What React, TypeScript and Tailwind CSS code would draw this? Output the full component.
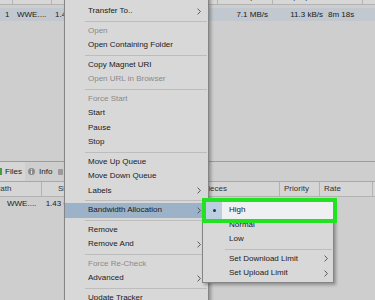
type MenuItem = {
  label?: string;
  disabled?: boolean;
  sub?: boolean;
  sep?: boolean;
  active?: boolean;
};

const MENU: MenuItem[] = [
  { label: "Transfer To..", sub: true },
  { sep: true },
  { label: "Open", disabled: true },
  { label: "Open Containing Folder" },
  { sep: true },
  { label: "Copy Magnet URI" },
  { label: "Open URL in Browser", disabled: true },
  { sep: true },
  { label: "Force Start", disabled: true },
  { label: "Start" },
  { label: "Pause" },
  { label: "Stop" },
  { sep: true },
  { label: "Move Up Queue" },
  { label: "Move Down Queue" },
  { label: "Labels", sub: true },
  { sep: true },
  { label: "Bandwidth Allocation", sub: true, active: true },
  { sep: true },
  { label: "Remove" },
  { label: "Remove And", sub: true },
  { sep: true },
  { label: "Force Re-Check", disabled: true },
  { label: "Advanced", sub: true },
  { sep: true },
  { label: "Update Tracker" },
];

function Chevron() {
  return (
    <svg width="4" height="7" viewBox="0 0 4 7" className="ml-auto shrink-0">
      <path d="M0.6 0.6 L3.4 3.5 L0.6 6.4" fill="none" stroke="#4a4a4a" strokeWidth="0.9" />
    </svg>
  );
}

function InfoIcon() {
  return (
    <svg width="7" height="7" viewBox="0 0 7 7" className="shrink-0">
      <circle cx="3.5" cy="3.5" r="3.5" fill="#8d8d8d" />
      <rect x="3" y="1.2" width="1" height="1" fill="#e6e6e6" />
      <rect x="3" y="2.8" width="1" height="3" fill="#e6e6e6" />
    </svg>
  );
}

export default function App() {
  return (
    <div className="relative h-[300px] w-[375px] overflow-hidden bg-[#cecece] font-['Liberation_Sans',Arial,sans-serif] text-[8px] leading-none text-[#1a1a1a]">
      {/* torrent list */}
      <div className="flex h-[162px] flex-col border-b border-[#9c9c9c]">
        <div className="-mt-[10px] flex h-[15px] shrink-0 items-center border-b border-[#b3b3b3] bg-[#d7d7d7] text-[#333]">
          <div className="flex h-full w-[13px] items-center border-r border-[#b3b3b3] pl-[3px]">#</div>
          <div className="flex h-full w-[39px] items-center border-r border-[#b3b3b3] pl-[3px]">Name</div>
          <div className="flex h-full w-[78px] items-center border-r border-[#b3b3b3] pl-[3px]">Size</div>
          <div className="flex h-full w-[88px] items-center border-r border-[#b3b3b3] pl-[13px]">Status</div>
          <div className="flex h-full w-[55px] items-center justify-end border-r border-[#b3b3b3] pr-[4px]">Down Speed</div>
          <div className="flex h-full w-[52px] items-center justify-end pr-[2px]">Up Speed</div>
          <div className="flex h-full w-[38px] items-center border-r border-[#b3b3b3] pl-[3px]">ETA</div>
          <div className="flex-1" />
        </div>
        <div className="mt-[3px] flex h-[13px] shrink-0 items-center bg-[#c2c8d0]">
          <div className="w-[13px] pl-[5px]">1</div>
          <div className="w-[39px] pl-[4px]">WWE....</div>
          <div className="w-[78px] pl-[3px]">1.43 GB</div>
          <div className="w-[88px]" />
          <div className="w-[55px] pr-[5px] text-right">7.1 MB/s</div>
          <div className="w-[52px] pr-[2px] text-right">11.3 kB/s</div>
          <div className="w-[38px] pl-[3px]">8m 18s</div>
        </div>
      </div>

      {/* tab bar */}
      <div className="flex h-[20px] items-center border-b border-[#a8a8a8]">
        <div className="flex h-full w-[25px] items-center gap-[3px] bg-[#d6d6d6]">
          <div className="-ml-[4px] h-[7px] w-[6px] bg-[#4c9a3f]" />
          <span>Files</span>
        </div>
        <div className="ml-[3px] flex items-center gap-[4px]">
          <InfoIcon />
          <span>Info</span>
        </div>
        <div className="ml-[6px] h-[6px] w-[5px] rounded-[1px] bg-[#9a9a9a]" />
      </div>

      {/* file list */}
      <div className="-ml-[6px] flex h-[15px] items-center border-b border-[#b3b3b3] bg-[#d5d5d5] text-[#333]">
        <div className="flex h-full w-[48px] items-center border-r border-[#b3b3b3] pl-[1px]">Path</div>
        <div className="flex h-full w-[38px] items-center border-r border-[#b3b3b3] pl-[16px]">Size</div>
        <div className="h-full w-[120px] border-r border-[#b3b3b3]" />
        <div className="flex h-full w-[80px] items-center border-r border-[#b3b3b3] pl-[3px]">Pieces</div>
        <div className="flex h-full w-[40px] items-center border-r border-[#b3b3b3] pl-[4px]">Priority</div>
        <div className="flex h-full w-[53px] items-center border-r border-[#b3b3b3] pl-[4px]">Rate</div>
      </div>
      <div className="-ml-[6px] flex h-[13px] items-center">
        <div className="w-[48px] pl-[13px]">WWE....</div>
        <div className="w-[38px] whitespace-nowrap pr-[5px] text-right">1.43 GB</div>
      </div>

      {/* context menu */}
      <div className="absolute left-[64px] top-[-6px] h-[330px] w-[145px] border border-[#858585] bg-[#d8d8d8] pt-[9px] shadow-[2px_2px_3px_rgba(0,0,0,0.3)]">
        {MENU.map((item, i) =>
          item.sep ? (
            <div key={i} className="flex h-[5px] items-center">
              <div className="ml-[20px] mr-[1px] h-px flex-1 bg-[#bdbdbd]" />
            </div>
          ) : (
            <div
              key={i}
              className={`flex h-[14.5px] items-center pl-[23px] pr-[7px] ${item.active ? "bg-[#9cb2c9]" : ""} ${item.disabled ? "text-[#8a8a8a]" : ""}`}
            >
              <span>{item.label}</span>
              {item.sub && <Chevron />}
            </div>
          )
        )}
      </div>

      {/* bandwidth submenu */}
      <div className="absolute left-[202px] top-[200px] w-[132px] border border-[#858585] bg-[#d8d8d8] pb-[1.5px] pt-[2px] shadow-[2px_2px_3px_rgba(0,0,0,0.3)]">
        <div className="relative flex h-[14.5px] items-center pl-[26px] pr-[5px]">
          <div className="absolute inset-x-0 -bottom-[2px] -top-[1.5px] flex">
            <div className="w-[19px] bg-[#bccfe2]" />
            <div className="flex-1 bg-[#eef0f2]" />
          </div>
          <div className="absolute left-[9.5px] top-[6px] h-[3px] w-[3px] rounded-full bg-[#1f3550]" />
          <span className="relative">High</span>
        </div>
        <div className="flex h-[14.5px] items-center pl-[26px] pr-[5px]">Normal</div>
        <div className="flex h-[14.5px] items-center pl-[26px] pr-[5px]">Low</div>
        <div className="flex h-[5px] items-center">
          <div className="ml-[22px] mr-[1px] h-px flex-1 bg-[#bdbdbd]" />
        </div>
        <div className="flex h-[14.5px] items-center pl-[26px] pr-[5px]">
          <span>Set Download Limit</span>
          <Chevron />
        </div>
        <div className="flex h-[14.5px] items-center pl-[26px] pr-[5px]">
          <span>Set Upload Limit</span>
          <Chevron />
        </div>
      </div>

      {/* highlight frame */}
      <div className="absolute left-[202px] top-[198px] h-[25px] w-[135px] border-[4px] border-[#22e222]" />
    </div>
  );
}
